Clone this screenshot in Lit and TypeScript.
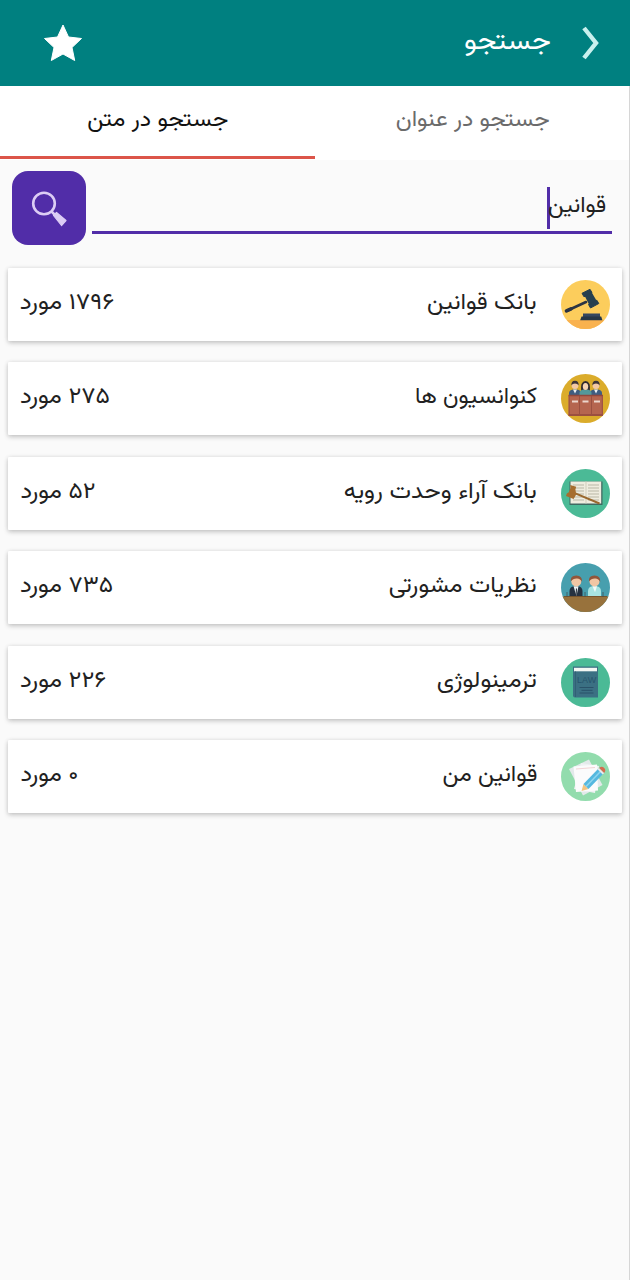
import { LitElement, html, svg, css } from "lit";
import { customElement, property } from "lit/decorators.js";

/* A line of text condensed or widened to a given measure. */
@customElement("fit-text")
class FitText extends LitElement {
  @property({ type: Number }) measure = 100;
  @property() text = "";
  static styles = css`
    :host { display: flex; direction: rtl; justify-content: flex-start; white-space: nowrap; }
    .run { display: inline-block; flex: none; transform-origin: 100% 50%; }
  `;
  updated() {
    const run = this.renderRoot.querySelector(".run") as HTMLElement;
    run.style.transform = "none";
    this.style.width = this.measure + "px";
    run.style.transform = `scaleX(${this.measure / run.getBoundingClientRect().width})`;
  }
  render() {
    return html`<span class="run">${this.text}</span>`;
  }
}

const person = (x: number, hair: string, suit: string) => svg`
  <path d="M${x - 6} 22v-3q0-3 4-3.500h4q4 .5 4 3.500v3z" fill=${suit}/>
  <path d="M${x - 2} 15.500h4l-2 4z" fill="#eef3f5"/>
  <circle cx=${x} cy="11.500" r="3.400" fill="#f3c9a5"/>
  <path d="M${x - 3.6} 11.500q-.4-4.700 3.600-4.700t3.600 4.700q-1-2-3.600-2t-3.600 2z" fill=${hair}/>`;

const icons: Record<string, unknown> = {
  gavel: svg`
    <rect width="49" height="49" fill="#fccd5c"/>
    <rect y="40" width="49" height="9" fill="#f9b24f"/>
    <path d="M6 30.700 25 22" stroke="#2b3443" stroke-width="2.600" stroke-linecap="round"/>
    <path d="M5.500 30.900 10 28.800" stroke="#2b3443" stroke-width="3.600" stroke-linecap="round"/>
    <path d="M23.500 15.500 30.500 12 36 21.500 28.500 25.500z" fill="#27404f"/>
    <path d="M21 13.300 29 9.300l2 3.300-8 4.200zM27.500 24.500l8.300-4.300 2 3.300-8.300 4.500z" fill="#27404f" stroke="#27404f" stroke-linejoin="round"/>
    <path d="M22 33.500h17v3.500H22z" fill="#344760"/>
    <path d="M20.500 36.500h19.700l1.200 3.700H19.200z" fill="#263747"/>`,
  jury: svg`
    <rect width="49" height="49" fill="#dbac2b"/>
    ${person(14, "#3d3538", "#3f5d80")}
    ${person(35, "#3d3538", "#3f5d80")}
    <path d="M20.200 18q-1.200-11 4.300-11t4.300 11z" fill="#2f2a30"/>
    <path d="M18.500 22v-3q0-3 4-3.500h4q4 .5 4 3.500v3z" fill="#54999a"/>
    <ellipse cx="24.500" cy="12.500" rx="2.700" ry="3.500" fill="#f6d3b4"/>
    <rect x="7.500" y="21" width="34.500" height="21" fill="#b5654f"/>
    <path d="M7.500 21.500h34.500M7.500 41h34.500" stroke="#92483c" stroke-width="1.300"/>
    <path d="M18.500 22v19M30.500 22v19M8.200 22v19M41.300 22v19" stroke="#9b5041"/>
    <path d="M11 27.500h6M21.500 27.500h6M33 27.500h6" stroke="#ecd6cc" stroke-width="2.200"/>`,
  verdict: svg`
    <rect width="49" height="49" fill="#4bba96"/>
    <rect x="8.500" y="12.500" width="33" height="23.500" fill="#3f6961"/>
    <rect x="9.500" y="12.500" width="30.700" height="22" fill="#efecdf"/>
    <path d="M12 16h11M12 19h11M12 22h11M12 25h11M12 28h11M12 31h11M27 16h11M27 19h11M27 22h11M27 25h11M27 28h11M27 31h11" stroke="#b9b7a6" stroke-width="1"/>
    <path d="M25 12.500v22" stroke="#d0cebd" stroke-width="1"/>
    <path d="M12 23.300 38.500 34.500" stroke="#9a692f" stroke-width="2"/>
    <path d="M9.200 16l6 1.800-.8 2.700.8 5-2.600 4.500-7.600-3 .8-2.500 2-1.300 1.700-4.200z" fill="#a66d2e"/>`,
  advisers: svg`
    <rect width="49" height="49" fill="#479fae"/>
    <path d="M8.500 34v-6q0-4 4.500-4.700h4q4.500.7 4.500 4.700v6z" fill="#263241"/>
    <path d="M12.500 23.300h5L15.500 33z" fill="#eef4f5"/>
    <path d="M15 25l1 1-.4 7-1-2z" fill="#29323e"/>
    <path d="M27 34v-6q0-4 4.500-4.700h4q4.500.7 4.500 4.700v6z" fill="#a8e4e1"/>
    <path d="M31.500 23.300h4.500l-2 6z" fill="#f2faf8"/>
    <circle cx="15.300" cy="18.500" r="5" fill="#f1c6a4"/>
    <circle cx="33.500" cy="18.500" r="5" fill="#f1c6a4"/>
    <path d="M9.800 18.500q-.8-6 5.500-6t5.700 6.500q-1.500-3.500-5-3.600-4-.2-6.200 3.100zM28 18.500q-.8-6 5.500-6t5.700 6.500q-1.500-3.500-5-3.600-4-.2-6.200 3.100z" fill="#91563b"/>
    <path d="M0 33.500h49V49H0z" fill="#98723c"/>
    <path d="M3 33.500h43" stroke="#77552e"/>
    <path d="M6 29v5M24 29v5M42 29v5" stroke="#415257" stroke-width=".8"/>`,
  book: svg`
    <rect width="49" height="49" fill="#4bba96"/>
    <path d="M12 8.500h25V39.500H14q-2 0-2-2z" fill="#3b7083"/>
    <rect x="13" y="9.800" width="23" height="3.500" fill="#f3f7f3"/>
    <path d="M14.500 13.500v25.500" stroke="#316175"/>
    <text x="16" y="25" class="law">LAW</text>
    <path d="M18.500 29.500h14M20.500 32.300h11M18.500 35h14" stroke="#284f67" stroke-width=".9"/>`,
  notes: svg`
    <rect width="49" height="49" fill="#92dcad"/>
    <path d="M8 17 28 7.500 41.500 33 22 43.500z" fill="#e2e9ea"/>
    <path d="M20 11l18 3-4 27-21-4z" fill="#eef1f3"/>
    <path d="M12.500 14.500 36 12.500l1 26-22 1.500z" fill="#fbfbfc"/>
    <path d="M15 17 34 15.500" stroke="#efc9cb" stroke-width=".8"/>
    <path d="M20.500 39l2-7 5 5z" fill="#f3c480"/>
    <path d="M22.500 32 37 17l5 5L27.500 37z" fill="#55b8df"/>
    <path d="M25 34.500 39.500 19.500" stroke="#8fd5ee" stroke-width="1.500"/>
    <path d="M36.700 17.500l1.500-1.500 5 5-1.500 1.500z" fill="#e7e9ed"/>
    <path d="M38.200 16q2.300-2.500 4.800-.3t.2 5.300z" fill="#d46c51"/>`,
};

interface Row { icon: string; title: string; titleWidth: number; count: string; countWidth: number; }

const rows: Row[] = [
  { icon: "gavel", title: "بانک قوانین", titleWidth: 109.5, count: "۱۷۹۶ مورد", countWidth: 94.5 },
  { icon: "jury", title: "کنوانسیون ها", titleWidth: 122, count: "۲۷۵ مورد", countWidth: 90 },
  { icon: "verdict", title: "بانک آراء وحدت رویه", titleWidth: 193, count: "۵۲ مورد", countWidth: 75 },
  { icon: "advisers", title: "نظریات مشورتی", titleWidth: 148, count: "۷۳۵ مورد", countWidth: 93 },
  { icon: "book", title: "ترمینولوژی", titleWidth: 100, count: "۲۲۶ مورد", countWidth: 86 },
  { icon: "notes", title: "قوانین من", titleWidth: 95, count: "۰ مورد", countWidth: 58 },
];

@customElement("app-root")
class AppRoot extends LitElement {
  static styles = css`
    :host {
      display: block; box-sizing: border-box; height: 1280px; direction: rtl;
      font-family: "Vazirmatn", "Noto Sans Arabic", "DejaVu Sans", sans-serif;
      background: linear-gradient(to left, #d6d6d6 1px, #fafafa 1px); color: #212121; overflow: hidden;
    }
    .bar {
      display: flex; align-items: center; height: 86px; box-sizing: border-box;
      background: #008080; color: #fff;
      padding: 0 29px 0 42px; font-size: 27px;
    }
    .bar .label { margin: -1px 30px 0 auto; }
    .chevron { flex: none; display: block; }
    .star { display: block; flex: none; }
    .tabs { display: grid; grid-template-columns: 314px 315px; height: 74px; margin-right: 1px; background: #fff; font-size: 22.500px; }
    .tab { display: flex; justify-content: center; box-sizing: border-box; height: 73px; padding-top: 18px; line-height: 34px; border-bottom: 3px solid transparent; color: #6b6b6b; }
    .tab:not(.on) { padding-left: 2px; }
    .tab.on { color: #111; border-color: #dc5549; padding-left: 1px; }
    .search { display: flex; padding: 11px 18px 0 12px; height: 97px; box-sizing: border-box; }
    .field { flex: 1; display: flex; align-items: flex-start; height: 63px; box-sizing: border-box; border-bottom: 3px solid #512da8; padding: 16px 6px 0 0; font-size: 22.500px; line-height: 40px; }
    .caret { width: 3px; height: 42px; background: #512da8; margin-right: -2px; }
    .go { flex: none; width: 74px; height: 74px; border: 0; padding: 0; border-radius: 16px; background: #512da8; margin-right: 6px; }
    .go svg { display: block; }
    .list { display: flex; flex-direction: column; gap: 21.400px; padding: 11px 8px 0 8px; }
    .card {
      display: flex; align-items: center; height: 73px; box-sizing: border-box; background: #fff;
      padding: 0 12px; font-size: 23px; line-height: 34px; border-radius: 1px;
      box-shadow: 0 2px 5px rgba(0,0,0,.2), 0 0 4px rgba(0,0,0,.08);
    }
    .icon { width: 49px; height: 49px; border-radius: 50%; overflow: hidden; display: block; flex: none; }
    .title { margin: -3px 24px 0 auto; }
    .count { margin-top: -3px; }
    .law { font: 9px "Liberation Sans", sans-serif; fill: #28566d; direction: ltr; }
  `;

  render() {
    return html`
      <header class="bar">
        <svg class="chevron" width="20" height="36" viewBox="0 0 20 36">
          <path d="M3 3 15 18 3 33" fill="none" stroke="#c9f0ee" stroke-width="4.400"/>
        </svg>
        <fit-text class="label" text="جستجو" .measure=${87}></fit-text>
        <svg class="star" width="42" height="42" viewBox="0 0 42 42">
          <path d="M21 3 26.500 15 39.500 16.500 30 25.500 32.700 38.500 21 32 9.300 38.500 12 25.500 2.500 16.500 15.500 15z" fill="#fff" stroke="#fff" stroke-linejoin="round"/>
        </svg>
      </header>
      <nav class="tabs">
        <div class="tab"><fit-text text="جستجو در عنوان" .measure=${154}></fit-text></div>
        <div class="tab on"><fit-text text="جستجو در متن" .measure=${141}></fit-text></div>
      </nav>
      <section class="search">
        <div class="field">
          <fit-text text="قوانین" .measure=${58}></fit-text>
          <i class="caret"></i>
        </div>
        <button class="go">
          <svg width="74" height="74" viewBox="0 0 74 74">
            <circle cx="32" cy="32.500" r="10.800" fill="none" stroke="#dccdf5" stroke-width="2.600"/>
            <path d="M39.500 40.500 43 44" stroke="#dccdf5" stroke-width="2.500"/>
            <path d="M41.500 44.500 44.500 41.500 54 49.500 49.500 54.500z" fill="#dccdf5" stroke="#dccdf5" stroke-width="1.200" stroke-linejoin="round"/>
          </svg>
        </button>
      </section>
      <main class="list">
        ${rows.map((r) => html`
          <article class="card">
            <svg class="icon" viewBox="0 0 49 49" fill="none">${icons[r.icon]}</svg>
            <fit-text class="title" .text=${r.title} .measure=${r.titleWidth}></fit-text>
            <fit-text class="count" .text=${r.count} .measure=${r.countWidth}></fit-text>
          </article>`)}
      </main>`;
  }
}
